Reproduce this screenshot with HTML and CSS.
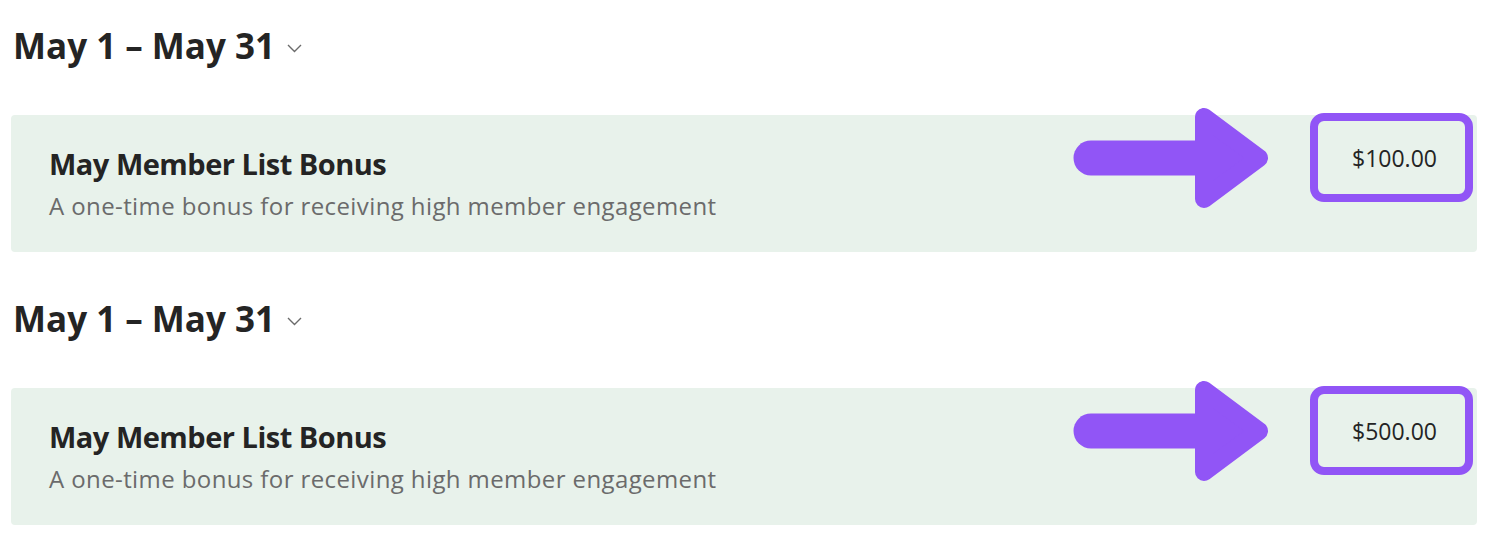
FILE: index.html
```html
<!DOCTYPE html>
<html lang="en">
<head>
  <meta charset="UTF-8">
  <title>Bonuses</title>
  <link rel="stylesheet" href="styles.css">
</head>
<body>
  <main class="page">
    <section class="period">
      <h2 class="period-title">May 1 – May 31
        <svg class="chevron" width="15" height="9" viewBox="0 0 15 9"><path d="M1 1l6.5 6.5L14 1" fill="none" stroke="#6b6b6b" stroke-width="1.4"/></svg>
      </h2>
      <div class="bonus-card">
        <div class="bonus-text">
          <h3 class="bonus-name">May Member List Bonus</h3>
          <p class="bonus-desc">A one-time bonus for receiving high member engagement</p>
        </div>
        <svg class="callout-arrow" width="196" height="102" viewBox="0 0 196 102">
          <line x1="18" y1="51" x2="128" y2="51" stroke="#9155f6" stroke-width="35" stroke-linecap="round"/>
          <polygon points="131,10 131,92 186,51" fill="#9155f6" stroke="#9155f6" stroke-width="18" stroke-linejoin="round"/>
        </svg>
        <div class="bonus-amount">$100.00</div>
      </div>
    </section>

    <section class="period">
      <h2 class="period-title">May 1 – May 31
        <svg class="chevron" width="15" height="9" viewBox="0 0 15 9"><path d="M1 1l6.5 6.5L14 1" fill="none" stroke="#6b6b6b" stroke-width="1.4"/></svg>
      </h2>
      <div class="bonus-card">
        <div class="bonus-text">
          <h3 class="bonus-name">May Member List Bonus</h3>
          <p class="bonus-desc">A one-time bonus for receiving high member engagement</p>
        </div>
        <svg class="callout-arrow" width="196" height="102" viewBox="0 0 196 102">
          <line x1="18" y1="51" x2="128" y2="51" stroke="#9155f6" stroke-width="35" stroke-linecap="round"/>
          <polygon points="131,10 131,92 186,51" fill="#9155f6" stroke="#9155f6" stroke-width="18" stroke-linejoin="round"/>
        </svg>
        <div class="bonus-amount">$500.00</div>
      </div>
    </section>
  </main>
</body>
</html>
```

FILE: styles.css
```css
body { margin: 0; background: #fff; color: #242424; font-family: "Open Sans", "Liberation Sans", sans-serif; }
.page { padding: 24px 23px 0 11px; }
.period { margin-bottom: 45px; }
.period-title { display: flex; align-items: center; gap: 12px; margin: 0 0 47px 2px; font-size: 35px; font-weight: 700; line-height: 44px; }
.chevron { margin-top: 4px; }
.bonus-card { position: relative; display: flex; align-items: flex-start; justify-content: space-between; height: 137px; padding-right: 4px; background: #e8f2eb; border-radius: 4px; box-sizing: border-box; }
.bonus-text { padding: 32px 0 0 38px; }
.bonus-name { margin: 0; font-size: 29px; font-weight: 700; line-height: 34px; letter-spacing: -0.5px; }
.bonus-desc { margin: 10px 0 0; font-size: 24px; line-height: 30px; letter-spacing: 0.4px; color: #6b6b6b; }
.callout-arrow { position: absolute; left: 1062px; top: -8px; }
.bonus-amount { display: flex; align-items: center; justify-content: center; width: 163px; height: 89px; margin-top: -2px; padding-left: 6px; border: 8px solid #9155f6; border-radius: 14px; box-sizing: border-box; font-size: 23px; }
```
